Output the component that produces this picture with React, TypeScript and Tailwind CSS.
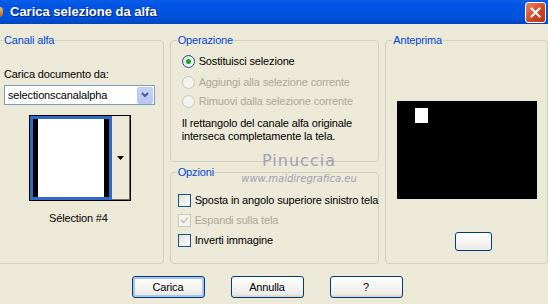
import React from "react";

const font = { fontFamily: '"Liberation Sans", Arial, sans-serif' };

function GroupBox({
  title,
  className,
  children,
}: {
  title: string;
  className?: string;
  children?: React.ReactNode;
}) {
  return (
    <div className={`relative rounded-[4px] border border-[#d0d0bf] ${className ?? ""}`}>
      <span className="absolute left-[6px] top-[-8px] bg-[#ece9d8] px-[1px] text-[11px] leading-[14px] text-[#0046d5]">
        {title}
      </span>
      {children}
    </div>
  );
}

function Radio({ label, checked, disabled }: { label: string; checked?: boolean; disabled?: boolean }) {
  return (
    <div className="flex h-[19px] items-center gap-[4px]">
      <span
        className={`flex h-[13px] w-[13px] items-center justify-center rounded-full border ${
          disabled ? "border-[#cac8bb] bg-[#f4f3ee]" : "border-[#1c5180] bg-[linear-gradient(135deg,#dcdcd7,#ffffff)]"
        }`}
      >
        {checked && <span className="h-[5px] w-[5px] rounded-full bg-[#21a121]" />}
      </span>
      <span className={`whitespace-nowrap text-[11px] ${disabled ? "text-[#aca899]" : "text-black"}`}>{label}</span>
    </div>
  );
}

function Check({ label, checked, disabled }: { label: string; checked?: boolean; disabled?: boolean }) {
  return (
    <div className="flex h-[20px] items-center gap-[4px]">
      <span
        className={`flex h-[13px] w-[13px] items-center justify-center border ${
          disabled ? "border-[#cac8bb] bg-[#f4f3ee]" : "border-[#1c5180] bg-[linear-gradient(135deg,#dcdcd7,#ffffff)]"
        }`}
      >
        {checked && (
          <svg width="9" height="9" viewBox="0 0 9 9">
            <path d="M1 4 L3.5 6.5 L8 1.5" fill="none" stroke={disabled ? "#cac8bb" : "#21a121"} strokeWidth="1.8" />
          </svg>
        )}
      </span>
      <span className={`whitespace-nowrap text-[11px] ${disabled ? "text-[#aca899]" : "text-black"}`}>{label}</span>
    </div>
  );
}

function XpButton({ label, focused }: { label: string; focused?: boolean }) {
  return (
    <button
      className={`flex h-[22px] w-[73px] items-center justify-center rounded-[3px] border border-[#003c74] bg-[linear-gradient(#ffffff,#ecebe6_85%,#d6d0c5)] text-[11px] text-black ${
        focused ? "shadow-[inset_0_0_0_2px_#a8c4f3]" : ""
      }`}
    >
      {label}
    </button>
  );
}

export default function App() {
  return (
    <div className="relative h-[304px] w-[548px] overflow-hidden bg-[#ece9d8] tracking-[-0.15px]" style={font}>
      {/* title bar */}
      <div className="flex h-[24px] items-center justify-between bg-[linear-gradient(#0a5fe8,#0055e5_20%,#0050d8_80%,#0043c0)] pr-[2px]">
        <div className="flex items-center">
          <span className="ml-[-4px] h-[10px] w-[7px] rounded-sm bg-[linear-gradient(#f0c060,#b06020)]" />
          <span className="ml-[7px] text-[13px] font-bold tracking-normal text-white [text-shadow:1px_1px_#0a1e6e]">
            Carica selezione da alfa
          </span>
        </div>
        <div className="flex h-[21px] w-[21px] items-center justify-center rounded-[3px] border border-white bg-[linear-gradient(135deg,#e8866b,#d0441f_60%,#b83412)]">
          <svg width="11" height="11" viewBox="0 0 11 11">
            <path d="M1.5 1.5 L9.5 9.5 M9.5 1.5 L1.5 9.5" stroke="white" strokeWidth="2" strokeLinecap="square" />
          </svg>
        </div>
      </div>

      {/* body */}
      <div className="flex flex-col pt-[16px]">
        <div className="flex gap-[6px]">
          {/* left */}
          <GroupBox title="Canali alfa" className="ml-[-4px] h-[224px] w-[168px]">
            <div className="flex flex-col pl-[7px] pt-[25px]">
              <span className="text-[11px] leading-[16px] text-black">Carica documento da:</span>
              <div className="mt-[3px] flex h-[20px] w-[151px] items-center justify-between border border-[#7f9db9] bg-white pl-[3px] pr-[1px]">
                <span className="text-[11px] text-black">selectionscanalalpha</span>
                <span className="flex h-[17px] w-[16px] items-center justify-center rounded-[2px] border border-[#b9cbf3] bg-[linear-gradient(#c6d3f7,#b4c8f5)]">
                  <svg width="8" height="6" viewBox="0 0 8 6">
                    <path d="M1 1 L4 4 L7 1" fill="none" stroke="#4d6185" strokeWidth="2" />
                  </svg>
                </span>
              </div>
              <div className="ml-[25px] mt-[10px] flex h-[86px] w-[102px] border border-black bg-white">
                <div className="flex h-full w-[82px] border-[3px] border-[#316ac5] bg-white">
                  <div className="w-[5px] bg-black" />
                  <div className="flex-1" />
                  <div className="w-[5px] bg-black" />
                </div>
                <div className="flex flex-1 items-center justify-center border-r border-b border-[#716f64] bg-[#ece9d8]">
                  <svg width="7" height="4" viewBox="0 0 7 4">
                    <path d="M0 0 H7 L3.5 4 Z" fill="black" />
                  </svg>
                </div>
              </div>
              <span className="ml-[45px] mt-[9px] text-[11px] text-black">Sélection #4</span>
            </div>
          </GroupBox>

          {/* middle */}
          <div className="flex w-[210px] flex-col gap-[10px]">
            <GroupBox title="Operazione" className="h-[122px]">
              <div className="flex flex-col pl-[11px] pt-[11px]">
                <Radio label="Sostituisci selezione" checked />
                <div className="mt-[2px] flex flex-col">
                  <Radio label="Aggiungi alla selezione corrente" disabled />
                  <Radio label="Rimuovi dalla selezione corrente" disabled />
                </div>
                <p className="mt-[6px] text-[11px] leading-[13px] text-black">
                  Il rettangolo del canale alfa originale
                  <br />
                  interseca completamente la tela.
                </p>
              </div>
            </GroupBox>
            <GroupBox title="Opzioni" className="h-[92px]">
              <div className="flex flex-col pl-[7px] pt-[17px]">
                <Check label="Sposta in angolo superiore sinistro tela" />
                <Check label="Espandi sulla tela" checked disabled />
                <Check label="Inverti immagine" />
              </div>
            </GroupBox>
          </div>

          {/* right */}
          <GroupBox title="Anteprima" className="h-[224px] w-[163px]">
            <div className="flex flex-col items-center pt-[60px]">
              <div className="h-[98px] w-[140px] bg-black pl-[18px] pt-[7px]">
                <div className="h-[15px] w-[13px] bg-white" />
              </div>
              <div className="ml-[14px] mt-[33px] h-[19px] w-[37px] rounded-[3px] border border-[#003c74] bg-[linear-gradient(#ffffff,#ecebe6)]" />
            </div>
          </GroupBox>
        </div>

        {/* buttons */}
        <div className="mt-[12px] flex justify-center gap-[26px] pr-[14px]">
          <XpButton label="Carica" focused />
          <XpButton label="Annulla" />
          <XpButton label="?" />
        </div>
      </div>

      {/* watermark */}
      <div className="pointer-events-none absolute left-[238px] top-[153px] flex w-[122px] flex-col items-center leading-none tracking-normal">
        <span className="text-[16px] font-medium tracking-[1px] text-[#9090ae] opacity-80" style={{ fontFamily: '"DejaVu Sans", sans-serif' }}>
          Pinuccia
        </span>
        <span className="mt-[5px] text-[10px] italic text-[#8f8fb0] opacity-80" style={{ fontFamily: '"DejaVu Sans", sans-serif' }}>
          www.maidiregrafica.eu
        </span>
      </div>
    </div>
  );
}
